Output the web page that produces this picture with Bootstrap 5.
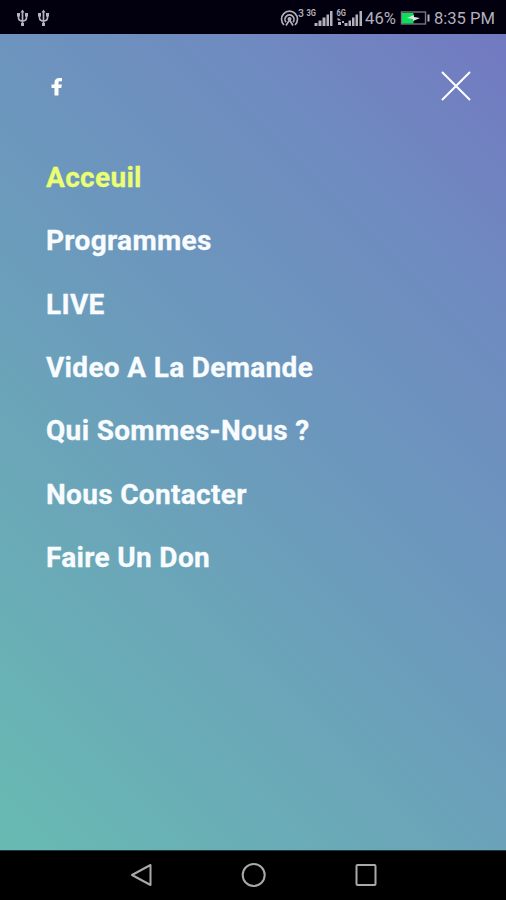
<!DOCTYPE html>
<html lang="fr">
<head>
<meta charset="utf-8">
<meta name="viewport" content="width=device-width, initial-scale=1">
<title>Menu</title>
<link rel="stylesheet" href="https://cdn.jsdelivr.net/npm/bootstrap@5.3.0/dist/css/bootstrap.min.css">
<style>
body { font-family: Roboto, sans-serif; background: #000; }
.screen { height: 900px; overflow: hidden; }
.statusbar { height: 34px; background: #02000f; color: #b2b1ba; font-size: 16.6px; line-height: 32px; padding: 2px 11px 0 16px; }
.statusbar span { padding-top: 2px; }
.statusbar svg, .softkeys svg, .topline svg { display: block; flex: none; }
.overlay-menu { background: linear-gradient(45deg, #68bab2 0%, #6c97bd 56%, #6f8ac0 80%, #7279c1 100%); padding: 36px 34px 0 46px; }
.topline { height: 32px; }
.menu-links { margin-top: 44.2px; }
.menu-links .nav-link { height: 63.3px; line-height: 63.3px; padding: 0; font-size: 28px; font-weight: 700; letter-spacing: .32px; color: #f8fcff; white-space: nowrap; -webkit-text-stroke: .3px currentColor; }
.menu-links .nav-link.active { color: #eaff72; }
.softkeys { height: 50px; background: #000; border-top: 1px solid #1c3a40; padding: 0 127px 1px 128px; }
</style>
<script src="https://cdn.jsdelivr.net/npm/bootstrap@5.3.0/dist/js/bootstrap.bundle.min.js"></script>
</head>
<body>
<div class="screen d-flex flex-column">
  <header class="statusbar d-flex align-items-center justify-content-between flex-shrink-0">
    <svg width="36" height="18" viewBox="0 0 36 18" fill="none" stroke="#b5b3be" stroke-width="1.7">
      <g id="usb"><path d="M6.500 2v14M2.500 6v2.500q0 3.500 4 3.500M10.500 6v2.500q0 3.500-4 3.500"/><path d="M4.500 3.500l2-3 2 3zM1 4h3v3.500H1zM9 4h3v3.500H9zM5 14h3v3H5z" fill="#b5b3be" stroke="none"/></g>
      <use href="#usb" x="21"/>
    </svg>
    <div class="d-flex align-items-center">
      <svg width="85" height="22" viewBox="0 0 85 22" fill="#b2b1ba">
        <g fill="none" stroke="#b2b1ba" stroke-width="1.700"><path d="M4 18A8 8 0 1 1 15 18M6 15.300A4.500 4.500 0 1 1 13 15.300"/><path d="M9.500 13l-3.500 5.500M9.500 13l3.500 5.500"/></g>
        <circle cx="9.500" cy="12" r="2"/>
        <text x="18" y="9.500" font-size="10.500" font-weight="500">3</text>
        <text x="26.500" y="9" font-size="8.500" font-weight="700" textLength="9.500" lengthAdjust="spacingAndGlyphs">3G</text>
        <path d="M34.500 16h3v3h-3zM38.500 13.500h3V19h-3zM42.500 10.500h3V19h-3zM46.500 7.500H49V19h-2.500zM50 4h2.500v15H50z"/>
        <text x="56.500" y="9" font-size="8.500" font-weight="700" textLength="9.500" lengthAdjust="spacingAndGlyphs">6G</text>
        <path d="M57 11.500h2l2 2h-3zM58 15h3v3h-3zM64.500 16h3v3h-3zM62 14h2v2h-2zM68.500 13.500H71V19h-2.500zM72 10.500h2.500V19H72zM75.500 7.500H78V19h-2.500zM79.500 4H82v15h-2.500z"/>
      </svg>
      <span class="pct">46%</span>
      <svg class="mx-1" width="30" height="16" viewBox="0 0 30 16">
        <rect x="1.500" y="2" width="24" height="12" fill="none" stroke="#77767e" stroke-width="1.400"/>
        <path d="M2 3h11.500v10.500H2z" fill="#0fdc5d"/>
        <path d="M7 8l7-3v2l6 1-7 3V9z" fill="#dce7e2"/>
        <path d="M27.500 4.500h2v7h-2z" fill="#b2b1ba"/>
      </svg>
      <span class="clock">8:35 PM</span>
    </div>
  </header>
  <main class="overlay-menu flex-grow-1">
    <div class="topline d-flex align-items-center justify-content-between">
      <a href="#" aria-label="Facebook"><svg width="22" height="32" viewBox="0 0 22 32"><path d="M8.500 25.500V18H5.500v-3.500h3V12.500C8.500 9.500 10.500 8 13 8h3v3.300h-2c-1 0-1.500.4-1.500 1.300v1.900h3.300L15.300 18h-2.800v7.500z" fill="#fff"/></svg></a>
      <a href="#" aria-label="Fermer"><svg width="32" height="32" viewBox="0 0 32 32"><path d="M2 2l28 28M30 2L2 30" stroke="#fff" stroke-width="2"/></svg></a>
    </div>
    <nav class="menu-links nav flex-column">
      <a class="nav-link active" href="#">Acceuil</a>
      <a class="nav-link" href="#">Programmes</a>
      <a class="nav-link" href="#">LIVE</a>
      <a class="nav-link" href="#">Video A La Demande</a>
      <a class="nav-link" href="#">Qui Sommes-Nous ?</a>
      <a class="nav-link" href="#">Nous Contacter</a>
      <a class="nav-link" href="#">Faire Un Don</a>
    </nav>
  </main>
  <footer class="softkeys d-flex align-items-center justify-content-between flex-shrink-0">
    <svg width="26" height="26" viewBox="0 0 26 26" fill="none" stroke="#aaa9a9" stroke-width="2"><path d="M22.500 3v20L4 13z" stroke-linejoin="round"/></svg>
    <svg width="26" height="26" viewBox="0 0 26 26" fill="none" stroke="#aaa9a9" stroke-width="2"><circle cx="12.700" cy="13" r="11"/></svg>
    <svg width="26" height="26" viewBox="0 0 26 26" fill="none" stroke="#aaa9a9" stroke-width="2"><rect x="3.500" y="3" width="19" height="20" rx="1"/></svg>
  </footer>
</div>
</body>
</html>
